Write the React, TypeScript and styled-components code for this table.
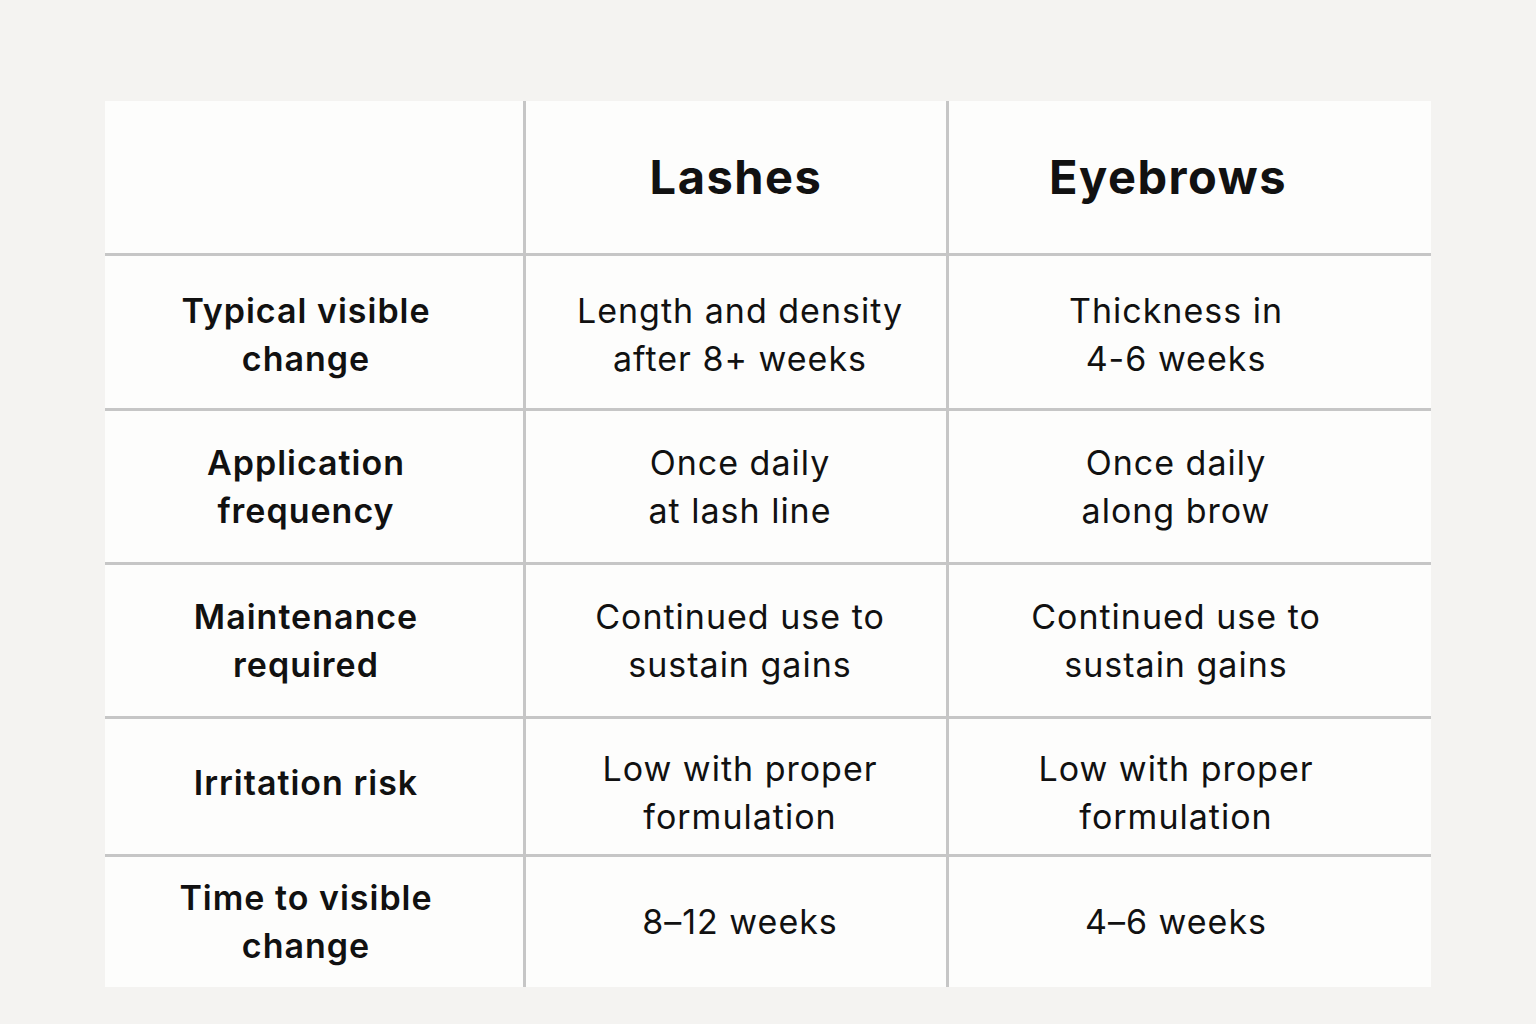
import React from "react";
import styled, { createGlobalStyle } from "styled-components";

const Global = createGlobalStyle`
  html, body { margin: 0; padding: 0; background: #f4f3f1; }
  body { font-family: Inter, "Noto Sans", "Liberation Sans", sans-serif; color: #111; }
`;

const Page = styled.div`
  width: 1536px;
  height: 1024px;
  padding: 101px 0 0 105px;
  box-sizing: border-box;
`;

const Table = styled.div`
  display: grid;
  grid-template-columns: 418px 420px 482px;
  grid-template-rows: 152px 152px 151px 151px 135px 130px;
  gap: 3px;
  width: 1326px;
  background: #c6c6c6;
`;

type Col = 0 | 1 | 2;
const pads: Record<Col, string> = {
  0: "0 16px 0 0",
  1: "0 0 0 8px",
  2: "0 28px 0 0",
};
const headPads: Record<Col, string> = {
  0: "0",
  1: "0",
  2: "0 44px 0 0",
};

const Cell = styled.div<{ $col: Col; $label?: boolean; $shift?: number }>`
  background: #fdfdfc;
  display: flex;
  align-items: center;
  justify-content: center;
  text-align: center;
  box-sizing: border-box;
  padding: ${(p) => pads[p.$col]};
  font-size: 34px;
  font-weight: ${(p) => (p.$label ? 600 : 400)};
  line-height: 48px;
  letter-spacing: 1px;
  color: #111;
  & > div {
    transform: translateY(${(p) => p.$shift ?? 0}px);
  }
`;

const HeadCell = styled.div<{ $col: Col }>`
  background: #fdfdfc;
  display: flex;
  align-items: center;
  justify-content: center;
  box-sizing: border-box;
  padding: ${(p) => headPads[p.$col]};
  font-size: 47px;
  font-weight: 700;
  letter-spacing: 1.5px;
  line-height: 1.2;
  color: #111;
`;

const rows: [string[], string[], string[], number, number][] = [
  [["Typical visible", "change"], ["Length and density", "after 8+ weeks"], ["Thickness in", "4-6 weeks"], 3, 3],
  [["Application", "frequency"], ["Once daily", "at lash line"], ["Once daily", "along brow"], 0, 0],
  [["Maintenance", "required"], ["Continued use to", "sustain gains"], ["Continued use to", "sustain gains"], 0, 0],
  [["Irritation risk"], ["Low with proper", "formulation"], ["Low with proper", "formulation"], -4, 6],
  [["Time to visible", "change"], ["8–12 weeks"], ["4–6 weeks"], 0, 0],
];

const Lines = ({ lines }: { lines: string[] }) => (
  <div>
    {lines.map((l, i) => (
      <div key={i}>{l}</div>
    ))}
  </div>
);

export default function App() {
  return (
    <Page>
      <Global />
      <Table>
        <HeadCell $col={0} />
        <HeadCell $col={1}>Lashes</HeadCell>
        <HeadCell $col={2}>Eyebrows</HeadCell>
        {rows.map((r, i) => (
          <React.Fragment key={i}>
            <Cell $col={0} $label $shift={r[3]}>
              <Lines lines={r[0]} />
            </Cell>
            <Cell $col={1} $shift={r[4]}>
              <Lines lines={r[1]} />
            </Cell>
            <Cell $col={2} $shift={r[4]}>
              <Lines lines={r[2]} />
            </Cell>
          </React.Fragment>
        ))}
      </Table>
    </Page>
  );
}
